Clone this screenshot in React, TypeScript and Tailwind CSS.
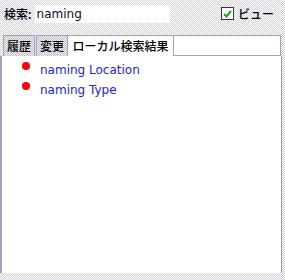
export default function App() {
  const dither =
    "bg-[repeating-conic-gradient(#d2d2f0_0_25%,#ffffff_0_50%)] bg-[length:2px_2px]";
  const tabOff =
    "h-[21px] flex items-center justify-center border border-[#a0a0c0] border-b-0 bg-[repeating-conic-gradient(#bdbdc8_0_25%,#f4f4f4_0_50%)] bg-[length:2px_2px] font-['Noto_Sans_CJK_JP',sans-serif] font-medium";
  return (
    <div
      className={`w-[285px] h-[280px] ${dither} flex flex-col text-[12px] text-black`}
    >
      {/* Search row */}
      <div className="h-[27px] flex items-center pl-[4px] pr-[4px]">
        <span className="font-['Noto_Sans_CJK_JP',sans-serif] font-medium text-[12px] leading-none">検索:</span>
        <div className="ml-[3px] w-[135px] h-[18px] bg-white flex items-center px-[2px] text-[12px] font-['DejaVu_Sans',sans-serif] text-[#10082a]">
          naming
        </div>
        <div className="ml-auto mr-[7px] flex items-center gap-[4px]">
          <div className="w-[13px] h-[13px] border border-[#1c3c6c] bg-white flex items-center justify-center">
            <svg width="9" height="8" viewBox="0 0 9 8">
              <path d="M1 4 L3.5 6.5 L8 1" stroke="#21a121" strokeWidth="2" fill="none" />
            </svg>
          </div>
          <span className="font-['Noto_Sans_CJK_JP',sans-serif] font-medium text-[12px] leading-none">ビュー</span>
        </div>
      </div>

      {/* Tabs */}
      <div className="h-[21px] flex items-end pl-[3px] pr-[4px] mt-[8px]">
        <div className={`w-[32px] ${tabOff}`}>履歴</div>
        <div className={`w-[32px] ml-[1px] ${tabOff}`}>変更</div>
        <div className="w-[105px] h-[21px] flex items-center justify-center bg-white border-t border-[#a0a0c0] font-['Noto_Sans_CJK_JP',sans-serif] font-medium">
          ローカル検索結果
        </div>
        <div className="flex-1 h-[21px] bg-white border border-[#a0a0c0]" />
      </div>

      {/* Panel */}
      <div className="flex-1 mb-[7px] mr-[3px] bg-white border-l-[2px] border-r border-[#a0a0c0] pt-[6px] pl-[20px] flex flex-col gap-[5px]">
        {["naming Location", "naming Type"].map((t) => (
          <div key={t} className="flex items-start h-[15px]">
            <span className="w-[8px] h-[8px] rounded-full bg-[#ff0000]" />
            <span className="ml-[10px] mt-[1px] text-[12px] leading-[15px] text-[#2020ff] font-['DejaVu_Sans',sans-serif]">
              {t}
            </span>
          </div>
        ))}
      </div>
    </div>
  );
}
